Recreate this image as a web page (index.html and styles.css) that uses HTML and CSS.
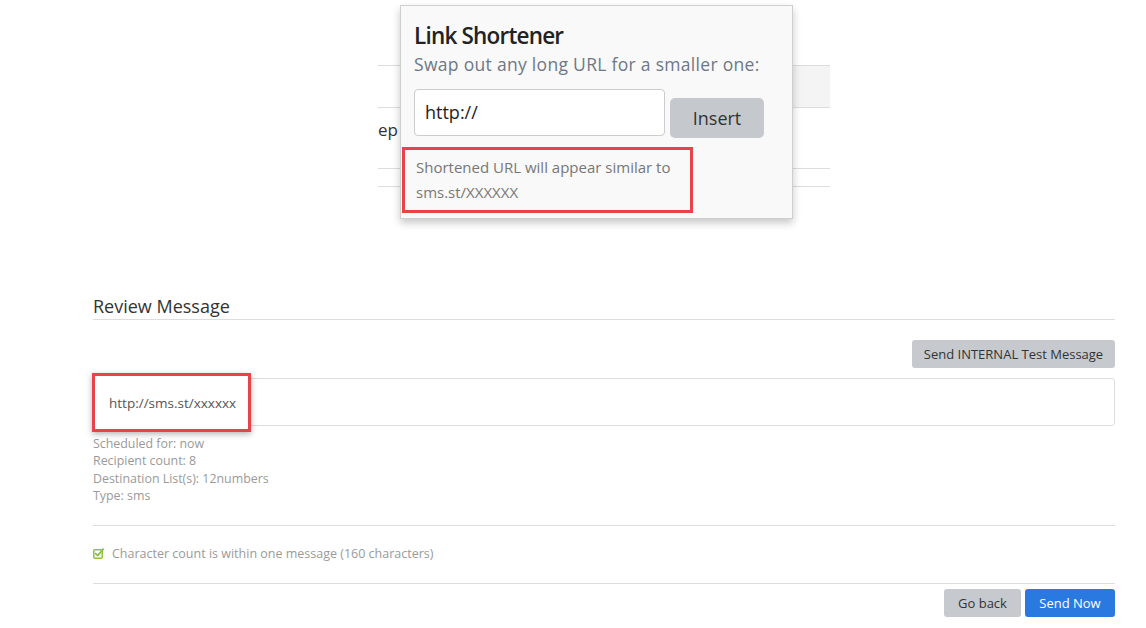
FILE: index.html
```html
<!DOCTYPE html>
<html>
<head>
<meta charset="utf-8">
<link rel="stylesheet" href="styles.css">
</head>
<body>
<div class="page">
  <div class="bg-table">
    <div class="bg-head"><div class="bg-head-cell"></div></div>
    <div class="bg-row"><span class="bg-text">ep</span></div>
    <div class="bg-row-thin"></div>
  </div>

  <div class="popover">
    <h3 class="pop-title">Link Shortener</h3>
    <p class="pop-sub">Swap out any long URL for a smaller one:</p>
    <div class="pop-form">
      <div class="pop-input">http://</div>
      <button class="pop-insert">Insert</button>
    </div>
    <div class="pop-hint highlight">Shortened URL will appear similar to<br>sms.st/XXXXXX</div>
  </div>

  <section class="review">
    <h4 class="review-title">Review Message</h4>
    <div class="test-row"><button class="btn btn-gray">Send INTERNAL Test Message</button></div>
    <div class="msg-box">
      <span class="msg-text highlight">http://sms.st/xxxxxx</span>
    </div>
    <div class="meta">
      <div>Scheduled for: now</div>
      <div>Recipient count: 8</div>
      <div>Destination List(s): 12numbers</div>
      <div>Type: sms</div>
    </div>
    <div class="count-row">
      <svg class="check" width="11" height="11" viewBox="0 0 11 11"><rect x="0.75" y="1.75" width="8.5" height="8.5" rx="1.2" fill="none" stroke="#8cc43c" stroke-width="1.5"/><path d="M2.6 5.6 L4.7 7.6 L10.2 1.2" fill="none" stroke="#8cc43c" stroke-width="1.9" stroke-linecap="round" stroke-linejoin="round"/></svg>
      <span>Character count is within one message (160 characters)</span>
    </div>
    <div class="actions">
      <button class="btn btn-gray">Go back</button>
      <button class="btn btn-blue">Send Now</button>
    </div>
  </section>
</div>
</body>
</html>
```
FILE: styles.css
```css
* { box-sizing: border-box; }
html, body { margin: 0; padding: 0; background: #fff; }
body { font-family: "Open Sans", "Noto Sans", sans-serif; color: #333; }
.page { position: relative; width: 1146px; height: 628px; overflow: hidden; }

.bg-table { margin-left: 378px; width: 452px; padding-top: 65px; height: 290px; }
.bg-head { height: 43px; border-top: 1px solid #ddd; border-bottom: 1px solid #ddd; display: flex; justify-content: flex-end; }
.bg-head-cell { width: 150px; background: #f4f4f4; }
.bg-row { height: 61px; border-bottom: 1px solid #ddd; padding-top: 10px; }
.bg-text { font-size: 17px; color: #333; }
.bg-row-thin { height: 18px; border-bottom: 1px solid #ddd; }

.popover {
  position: absolute; left: 400px; top: 5px; width: 393px; height: 214px;
  background: #f9f9f9; border: 1px solid #cfcfcf;
  box-shadow: 0 4px 8px rgba(0,0,0,0.22);
  padding: 14px 0 0 13px;
}
.pop-title { margin: 0; font-size: 22.5px; font-weight: 600; color: #222; letter-spacing: -0.8px; line-height: 32px; }
.pop-sub { margin: 0; font-size: 17.5px; color: #6d7886; line-height: 24px; letter-spacing: 0.3px; }
.pop-form { display: flex; align-items: flex-start; gap: 5px; margin-top: 13px; }
.pop-input {
  width: 251px; height: 47px; border: 1px solid #ccc; border-radius: 4px; background: #fff;
  font-size: 18px; padding: 10px 0 0 10px; color: #222;
}
.pop-insert {
  margin-top: 9px; width: 94px; height: 40px; border: none; border-radius: 5px; background: #c5c9cd;
  font-family: inherit; font-size: 18px; color: #333; padding: 0;
}
.pop-hint {
  margin: 9px 0 0 -12px; width: 291px; height: 66px; padding: 5px 0 0 11px;
  font-size: 15px; line-height: 25px; color: #777;
}
.highlight { border: 3px solid #e8434b; }

.review { margin: 0 31px 0 93px; padding-top: 3px; }
.review-title { margin: 0; font-size: 18px; font-weight: 400; color: #333; line-height: 26px; padding-bottom: 0; border-bottom: 1px solid #ddd; }
.test-row { display: flex; justify-content: flex-end; margin-top: 20px; }
.btn { border: none; border-radius: 3px; font-family: inherit; font-size: 13px; height: 28px; padding: 0 15px; color: #333; }
.btn-gray { background: #c6cacf; }
.btn-blue { background: #2a79e0; color: #fff; }
.test-row .btn { width: 203px; padding: 0; }
.msg-box { margin-top: 10px; height: 48px; border: 1px solid #ddd; border-radius: 3px; position: relative; }
.msg-text {
  position: absolute; left: -2px; top: -6px; width: 159px; height: 59px;
  box-shadow: 0 2px 6px rgba(0,0,0,0.3); background: #fff;
  font-size: 13.5px; color: #555; padding: 18px 0 0 14px;
}
.meta { margin-top: 9px; font-size: 12.4px; line-height: 17.4px; color: #9a9a9a; padding-bottom: 20px; border-bottom: 1px solid #ddd; }
.count-row { display: flex; align-items: center; gap: 8px; height: 58px; border-bottom: 1px solid #ddd; font-size: 12.5px; color: #9a9a9a; padding-bottom: 2px; }
.check { flex: none; }
.actions { display: flex; justify-content: flex-end; gap: 4px; margin-top: 5px; }
.actions .btn-gray { width: 77px; padding: 0; }
.actions .btn-blue { width: 90px; padding: 0; }
```
